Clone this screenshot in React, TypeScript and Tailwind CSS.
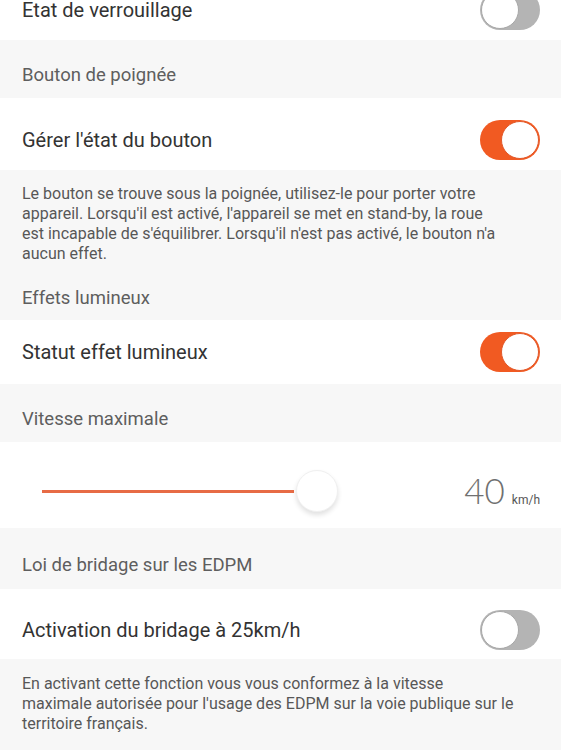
import React from "react";

function Toggle({ on }: { on: boolean }): React.JSX.Element {
  return <div
    className={`relative w-[60px] h-[40px] rounded-full shrink-0 ${on ? "bg-[#f15a22]" : "bg-[#b4b4b4]"}`}
  >
    <div
      className={`absolute top-[1px] w-[38px] h-[38px] rounded-full bg-white border-[1.5px] ${on ? "right-[1px] border-[#e2592a]" : "left-[1px] border-[#a8a8a8]"}`}
    />
  </div>;
}

function SwitchRow({ label, on, className }: { label: string; on: boolean; className: string }): React.JSX.Element {
  return <div className={`flex items-center justify-between bg-white pl-[22px] pr-[21px] ${className}`}>
    <span className="text-[20px] leading-[24px] text-[#333333]">{label}</span>
    <Toggle on={on} />
  </div>;
}

function Header({ children, className = "pt-[24px] pb-[12px]" }: { children: React.ReactNode; className?: string }): React.JSX.Element {
  return <div className={`px-[22px] text-[18.5px] leading-[22px] text-[#5e5e5e] ${className}`}>
    {children}
  </div>;
}

export default function App(): React.JSX.Element {
  return <div
    className="w-[561px] h-[750px] overflow-hidden bg-[#f7f7f7]"
    style={{ fontFamily: "Roboto, 'Noto Sans', sans-serif" }}
  >
    <SwitchRow label="Etat de verrouillage" on={false} className="-mt-[20px] h-[60px]" />

    <Header>Bouton de poignée</Header>

    <SwitchRow label="Gérer l'état du bouton" on={true} className="h-[72px] pt-[12px]" />

    <div className="px-[22px] pt-[14px] text-[16px] leading-[20px] text-[#575757] whitespace-nowrap">
      Le bouton se trouve sous la poignée, utilisez-le pour porter votre<br />
      appareil. Lorsqu'il est activé, l'appareil se met en stand-by, la roue<br />
      est incapable de s'équilibrer. Lorsqu'il n'est pas activé, le bouton n'a<br />
      aucun effet.
    </div>
    <Header className="pt-[23px] pb-[11px]">Effets lumineux</Header>

    <SwitchRow label="Statut effet lumineux" on={true} className="h-[64px]" />

    <Header>Vitesse maximale</Header>

    <div className="flex items-center h-[86px] pt-[12px] bg-white pl-[42px] pr-[21px]">
      <div className="flex items-center">
        <div className="h-[3px] w-[252px] bg-[#e76b45]" />
        <div className="ml-[2px] w-[42px] h-[42px] rounded-full bg-white border border-[#f0f0f0] shadow-[0_3px_5px_rgba(0,0,0,0.12)]" />
      </div>
      <div className="ml-auto flex items-baseline gap-[7px]">
        <span className="text-[35px] leading-none font-light text-[#707070]" style={{ fontFamily: "Lato, Roboto, sans-serif" }}>40</span>
        <span className="text-[12px] text-[#555555]">km/h</span>
      </div>
    </div>

    <Header className="pt-[26px] pb-[13px]">Loi de bridage sur les EDPM</Header>

    <SwitchRow label="Activation du bridage à 25km/h" on={false} className="h-[70px] pt-[11px]" />

    <div className="px-[22px] pt-[15px] text-[16px] leading-[20px] text-[#575757] whitespace-nowrap">
      En activant cette fonction vous vous conformez à la vitesse<br />
      maximale autorisée pour l'usage des EDPM sur la voie publique sur le<br />
      territoire français.
    </div>
  </div>;
}
